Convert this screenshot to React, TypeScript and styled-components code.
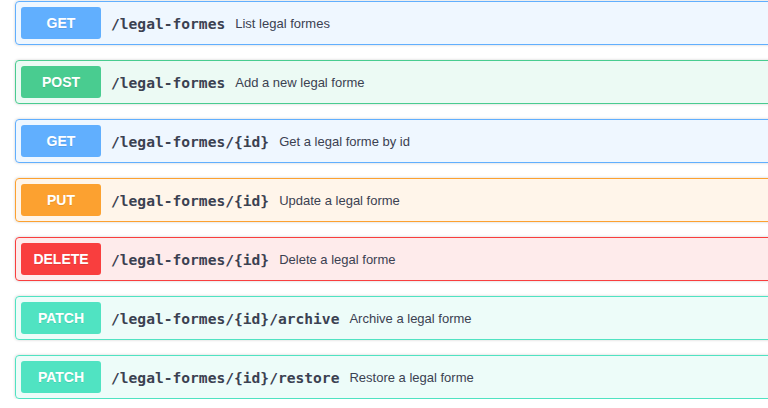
import * as React from "react";
import styled, { createGlobalStyle } from "styled-components";

type Method = "get" | "post" | "put" | "delete" | "patch";

const colors: Record<Method, string> = {
  get: "#61affe",
  post: "#49cc90",
  put: "#fca130",
  delete: "#f93e3e",
  patch: "#50e3c2",
};

const backgrounds: Record<Method, string> = {
  get: "rgba(97, 175, 254, 0.1)",
  post: "rgba(73, 204, 144, 0.1)",
  put: "rgba(252, 161, 48, 0.1)",
  delete: "rgba(249, 62, 62, 0.1)",
  patch: "rgba(80, 227, 194, 0.1)",
};

const GlobalStyle = createGlobalStyle`
  html, body {
    margin: 0;
    padding: 0;
    background: #fff;
    overflow: hidden;
  }
`;

const Wrapper = styled.div`
  width: 820px;
  padding: 1px 0 0 15px;
  display: flex;
  flex-direction: column;
  gap: 15px;
`;

const Block = styled.div<{ $method: Method }>`
  display: flex;
  align-items: center;
  padding: 5px;
  border: 1px solid ${(p) => colors[p.$method]};
  border-radius: 4px;
  background: ${(p) => backgrounds[p.$method]};
  box-shadow: 0 0 3px rgba(0, 0, 0, 0.19);
`;

const Badge = styled.span<{ $method: Method }>`
  min-width: 80px;
  height: 32px;
  display: flex;
  align-items: center;
  justify-content: center;
  border-radius: 3px;
  background: ${(p) => colors[p.$method]};
  color: #fff;
  font-family: "Liberation Sans", Arial, sans-serif;
  font-size: 14px;
  font-weight: 700;
  text-shadow: 0 1px 0 rgba(0, 0, 0, 0.1);
`;

const Path = styled.span`
  padding: 0 10px;
  font-family: "DejaVu Sans Mono", monospace;
  font-size: 14.6px;
  font-weight: 700;
  color: #3b4151;
`;

const Description = styled.span`
  font-family: "Liberation Sans", Arial, sans-serif;
  font-size: 13px;
  color: #3b4151;
`;

const operations: { method: Method; path: string; summary: string }[] = [
  { method: "get", path: "/legal-formes", summary: "List legal formes" },
  { method: "post", path: "/legal-formes", summary: "Add a new legal forme" },
  { method: "get", path: "/legal-formes/{id}", summary: "Get a legal forme by id" },
  { method: "put", path: "/legal-formes/{id}", summary: "Update a legal forme" },
  { method: "delete", path: "/legal-formes/{id}", summary: "Delete a legal forme" },
  { method: "patch", path: "/legal-formes/{id}/archive", summary: "Archive a legal forme" },
  { method: "patch", path: "/legal-formes/{id}/restore", summary: "Restore a legal forme" },
];

const App = () => {
  return (
    <>
      <GlobalStyle />
      <Wrapper>
        {operations.map((op, i) => (
          <Block key={i} $method={op.method}>
            <Badge $method={op.method}>{op.method.toUpperCase()}</Badge>
            <Path>{op.path}</Path>
            <Description>{op.summary}</Description>
          </Block>
        ))}
      </Wrapper>
    </>
  );
};

export default App;
